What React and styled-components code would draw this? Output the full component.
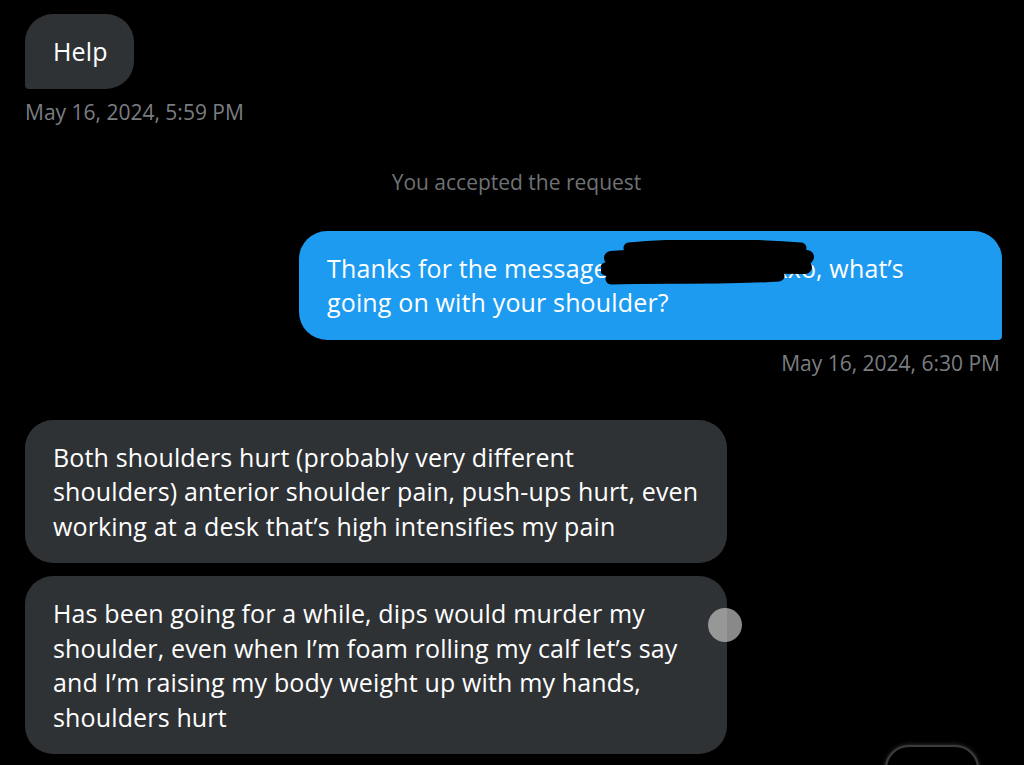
import React from 'react';
import styled, { createGlobalStyle } from 'styled-components';

const GlobalStyle = createGlobalStyle`
  html, body {
    margin: 0;
    background: #000;
    overflow: hidden;
  }
  body {
    font-family: "Open Sans", "Liberation Sans", Arial, sans-serif;
  }
`;

const Screen = styled.div`
  width: 1024px;
  height: 765px;
  background: #000;
  position: relative;
  overflow: hidden;
  display: flex;
  flex-direction: column;
  padding: 14px 22px 0 25px;
  box-sizing: border-box;
`;

const Row = styled.div`
  display: flex;
  flex-direction: column;
  align-items: ${(p) => (p.$mine ? 'flex-end' : 'flex-start')};
  margin-top: ${(p) => p.$top || 0}px;
`;

const Bubble = styled.div`
  position: relative;
  box-sizing: border-box;
  background: ${(p) => (p.$mine ? '#1d9bf0' : '#2f3235')};
  color: #fff;
  font-size: 25px;
  line-height: 34.5px;
  letter-spacing: 0.15px;
  width: ${(p) => p.$w || 'auto'};
  padding: 20px 28px 20px;
  border-radius: ${(p) =>
    p.$mine ? '28px 28px 4px 28px' : p.$tail ? '28px 28px 28px 4px' : '28px'};
`;

const Stamp = styled.div`
  color: #7b7e81;
  font-size: 21px;
  line-height: 28px;
  margin-top: 9px;
`;

const Notice = styled.div`
  align-self: center;
  color: #6f7275;
  font-size: 21px;
  line-height: 28px;
  margin-top: 42px;
  margin-left: 6px;
`;

const Redact = styled.span`
  position: absolute;
  left: 302px;
  top: 9px;
  width: 214px;
  height: 50px;
`;

const Handle = styled.div`
  position: absolute;
  right: -15px;
  top: 32px;
  width: 34px;
  height: 34px;
  border-radius: 50%;
  background: rgba(190, 190, 190, 0.72);
`;

const FloatButton = styled.div`
  position: absolute;
  left: 885px;
  top: 745px;
  width: 90px;
  height: 60px;
  border-radius: 24px;
  border: 2px solid #3a3d40;
  box-shadow: 0 0 4px rgba(120, 120, 120, 0.5);
  background: #000;
`;

function Scribble() {
  return (
    <Redact>
      <svg width="214" height="50" viewBox="0 0 214 50">
        <g stroke="#000" strokeLinecap="round" fill="none">
          <path d="M28 8 C80 3 150 4 200 8" strokeWidth="11" />
          <path d="M10 18 C70 13 150 14 206 17" strokeWidth="14" />
          <path d="M6 29 C70 25 150 26 204 27" strokeWidth="14" />
          <path d="M10 39 C60 37 120 40 178 36" strokeWidth="11" />
          <path d="M150 23 C170 21 190 22 196 22" strokeWidth="16" />
        </g>
      </svg>
    </Redact>
  );
}

export default function App() {
  return (
    <>
      <GlobalStyle />
      <Screen>
        <Row>
          <Bubble $tail style={{ width: 109 }}>Help</Bubble>
          <Stamp>May 16, 2024, 5:59 PM</Stamp>
        </Row>

        <Notice>You accepted the request</Notice>

        <Row $mine $top={35}>
          <Bubble $mine $w="703px">
            Thanks for the message Xxxxxxxxxxxxxxo, what’s
            <br />
            going on with your shoulder?
            <Scribble />
          </Bubble>
          <Stamp style={{ marginRight: 2 }}>May 16, 2024, 6:30 PM</Stamp>
        </Row>

        <Row $top={43}>
          <Bubble $w="702px">
            Both shoulders hurt (probably very different
            <br />
            shoulders) anterior shoulder pain, push-ups hurt, even
            <br />
            working at a desk that’s high intensifies my pain
          </Bubble>
        </Row>

        <Row $top={13}>
          <Bubble $w="702px">
            Has been going for a while, dips would murder my
            <br />
            shoulder, even when I’m foam rolling my calf let’s say
            <br />
            and I’m raising my body weight up with my hands,
            <br />
            shoulders hurt
            <Handle />
          </Bubble>
        </Row>

        <FloatButton />
      </Screen>
    </>
  );
}
